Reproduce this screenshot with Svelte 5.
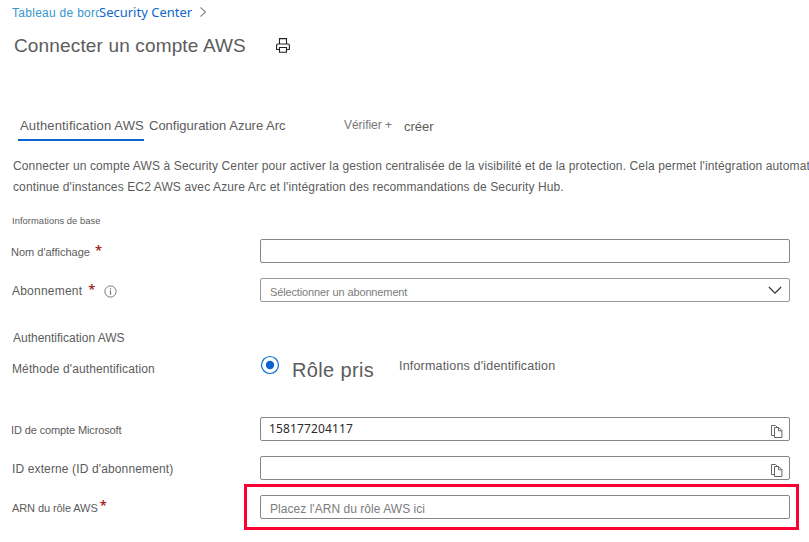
<script>
  const accountId = '158177204117';
</script>

{#snippet copyIcon()}
  <svg class="copy" width="12" height="14" viewBox="0 0 12 14" fill="none" stroke="#666" stroke-width="1">
    <path d="M3.5 10.5H.5V.5H4.5L6.5 2.5" />
    <path d="M3.5 2.5H7.8L10.9 5.6V12.5H3.5Z" />
    <path d="M7.5 2.5V5.8H10.9" />
  </svg>
{/snippet}

<main class="page">
  <nav class="crumbs">
    <span class="dash">Tableau de bord</span>
    <span class="center">Security Center</span>
    <svg width="8" height="10" viewBox="0 0 8 10" fill="none" stroke="#8a8a8a" stroke-width="1.1"><path d="M1.5 .5 6.5 5 1.5 9.5" /></svg>
  </nav>

  <header class="title">
    <h1>Connecter un compte AWS</h1>
    <svg width="14" height="15" viewBox="0 0 14 15" fill="none" stroke="#222" stroke-width="1.1">
      <path d="M3.5 6V.6H10.5V6" />
      <path d="M3.2 11.5H.6V7.3Q.6 6 1.9 6H12.1Q13.4 6 13.4 7.3V11.5H10.8" />
      <path d="M3.5 9.5H10.5V14.2H3.5Z" />
    </svg>
  </header>

  <div class="tabs">
    <span class="tab active">Authentification AWS</span>
    <span class="tab arc">Configuration Azure Arc</span>
    <span class="tab verify">Vérifier +</span>
    <span class="tab create">créer</span>
  </div>

  <div class="intro">
    <div>Connecter un compte AWS à Security Center pour activer la gestion centralisée de la visibilité et de la protection. Cela permet l'intégration automat</div>
    <div>continue d'instances EC2 AWS avec Azure Arc et l'intégration des recommandations de Security Hub.</div>
  </div>

  <h2 class="basics">Informations de base</h2>

  <div class="row">
    <div class="label name"><span>Nom d'affichage</span><b>*</b></div>
    <div class="field"></div>
  </div>
  <div class="row">
    <div class="label sub"><span>Abonnement</span><b>*</b>
      <svg width="13" height="13" viewBox="0 0 13 13" fill="none" stroke="#777"><circle cx="6.5" cy="6.5" r="5.6" /><path d="M6.5 5.5V9.8M6.5 3.2V4.5" stroke-width="1.2" /></svg>
    </div>
    <div class="field select">
      <span class="hint pick">Sélectionner un abonnement</span>
      <svg width="14" height="9" viewBox="0 0 14 9" fill="none" stroke="#333" stroke-width="1.2"><path d="M.9 1 7 7.1 13.1 1" /></svg>
    </div>
  </div>

  <h2 class="auth">Authentification AWS</h2>

  <div class="method">
    <span class="method-label">Méthode d'authentification</span>
    <svg class="radio" width="20" height="20" viewBox="0 0 20 20"><circle cx="10" cy="10" r="8.5" fill="none" stroke="#0a6cd0" stroke-width="1.2" /><circle cx="10" cy="10" r="4.2" fill="#0a64cc" /></svg>
    <span class="role">Rôle pris</span>
    <span class="ident">Informations d'identification</span>
  </div>

  <div class="row">
    <div class="label ms"><span>ID de compte Microsoft</span></div>
    <div class="field"><span class="value">{accountId}</span>{@render copyIcon()}</div>
  </div>
  <div class="row">
    <div class="label ext"><span>ID externe (ID d'abonnement)</span></div>
    <div class="field">{@render copyIcon()}</div>
  </div>
  <div class="row arn-row">
    <div class="label arn"><span>ARN du rôle AWS</span><b>*</b></div>
    <div class="field"><span class="hint place">Placez l'ARN du rôle AWS ici</span></div>
    <div class="highlight"></div>
  </div>
</main>

<style>
  :global(body) { background: #fff; }
  .page {
    width: 809px; height: 542px; overflow: hidden; box-sizing: border-box; padding-top: 3px;
    font: 12px/20px 'Liberation Sans', Arial, sans-serif; color: #5c5c5c; white-space: nowrap;
  }
  h1, h2 { margin: 0; font-weight: normal; }
  svg { display: block; flex: none; }

  .crumbs { display: flex; height: 20px; padding-left: 12px; }
  .dash { width: 87px; overflow: hidden; letter-spacing: .28px; color: #3596cc; }
  .center { width: 93px; margin-top: -1px; font: 13px/20px 'Noto Sans', 'Open Sans', sans-serif; color: #0f66c8; }
  .crumbs svg { margin: 4px 0 0 7px; }

  .title { display: flex; margin-top: 12px; height: 20px; padding-left: 14px; }
  h1 { width: 262px; margin-top: 1px; font-size: 19px; line-height: 20px; letter-spacing: .15px; }
  .title svg { margin-top: 3px; }

  .tabs { display: flex; margin-top: 61px; height: 25px; padding-left: 18px; font-size: 13px; }
  .tab { box-sizing: border-box; height: 25px; }
  .active { width: 126px; padding-left: 2px; border-bottom: 2px solid #0a64cc; letter-spacing: .15px; }
  .arc { width: 195px; padding-left: 5px; letter-spacing: 0; }
  .verify { width: 61px; padding-left: 5px; margin-top: -1px; font-size: 12px; letter-spacing: -.05px; color: #777; }
  .create { padding-left: 4px; margin-top: 1px; }

  .intro { margin-top: 15px; padding-left: 13px; line-height: 21px; letter-spacing: .121px; }
  .basics { margin: 13px 0 8px 12px; font-size: 9.4px; line-height: 20px; letter-spacing: .05px; }

  .row { display: flex; height: 24px; margin-bottom: 15px; }
  .label { display: flex; box-sizing: border-box; width: 260px; padding: 3px 0 0 12px; }
  .label b { font: 600 13px/20px 'Noto Sans', sans-serif; color: #a8262e; letter-spacing: 0; }
  .name { padding-left: 11px; font-size: 11px; }
  .name b { margin: -2px 0 0 5px; }
  .sub { letter-spacing: .22px; }
  .sub b { margin: -2px 0 0 6px; }
  .sub svg { margin: 4px 0 0 9px; }
  .ms { padding-left: 11px; font-size: 11px; letter-spacing: -.12px; }
  .ext { padding-left: 12px; letter-spacing: .13px; }
  .arn { font-size: 11px; letter-spacing: -.09px; }
  .arn b { margin: -3px 0 0 2px; }

  .field { display: flex; box-sizing: border-box; width: 530px; height: 24px; padding: 0 6px 0 9px; border: 1px solid #868686; border-radius: 2px; }
  .field svg { margin-left: auto; }
  .select { padding-right: 7px; border-color: #999; }
  .select svg { margin-top: 7px; }
  .copy { margin-top: 7px; }
  .hint { color: #7c7c7c; }
  .pick { padding-top: 3px; font-size: 11px; letter-spacing: -.13px; }
  .place { padding-top: 3px; letter-spacing: .04px; }
  .value { margin-left: -1px; padding-top: 1px; font: 12px/20px 'Noto Sans', 'Open Sans', sans-serif; letter-spacing: .13px; color: #2b2b2b; }

  .auth { margin: 26px 0 7px 13px; font-size: 12px; line-height: 20px; }
  .method { display: flex; height: 62px; padding-left: 12px; }
  .method-label { width: 248px; padding-top: 4px; letter-spacing: .12px; }
  .role { width: 107px; padding: 5px 0 0 12px; box-sizing: border-box; font-size: 20px; letter-spacing: .35px; }
  .ident { padding: 1px 0 0 12px; font-size: 12.5px; letter-spacing: .18px; }

  .arn-row { position: relative; }
  .highlight { position: absolute; box-sizing: border-box; left: 244px; top: -11px; width: 555px; height: 46px; border: 3px solid #fb0033; }
</style>
